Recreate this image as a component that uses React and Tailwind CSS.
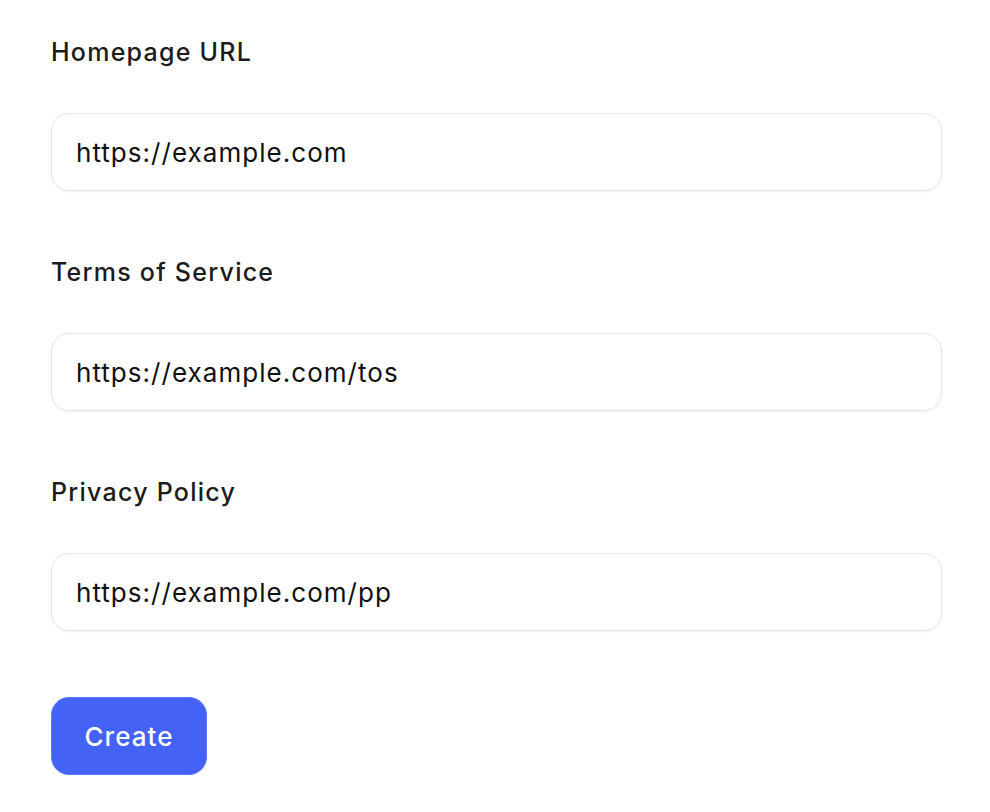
export default function App() {
  const fields = [
    { label: "Homepage URL", value: "https://example.com" },
    { label: "Terms of Service", value: "https://example.com/tos" },
    { label: "Privacy Policy", value: "https://example.com/pp" },
  ];

  return (
    <div className="min-h-screen bg-white px-[51px] pt-9 font-['Inter',sans-serif] text-[#1c1c1c]">
      <form className="flex w-[891px] flex-col gap-[65px]" onSubmit={(e) => e.preventDefault()}>
        {fields.map((f) => (
          <div key={f.label} className="flex flex-col gap-[45px]">
            <label className="text-[25px] leading-8 font-medium tracking-[0.05em]">{f.label}</label>
            <input
              defaultValue={f.value}
              className="h-[78px] w-full rounded-[18px] border border-[#e6e6e6] px-6 text-[26px] tracking-[0.04em] text-[#111] shadow-[0_1px_2px_rgba(0,0,0,0.05)] outline-none"
            />
          </div>
        ))}
        <div className="mt-px">
          <button
            type="submit"
            className="h-[78px] w-[156px] rounded-[18px] border border-[#5b75f7] bg-[#4462f6] text-[26px] font-medium tracking-[0.04em] text-white"
          >
            Create
          </button>
        </div>
      </form>
    </div>
  );
}
